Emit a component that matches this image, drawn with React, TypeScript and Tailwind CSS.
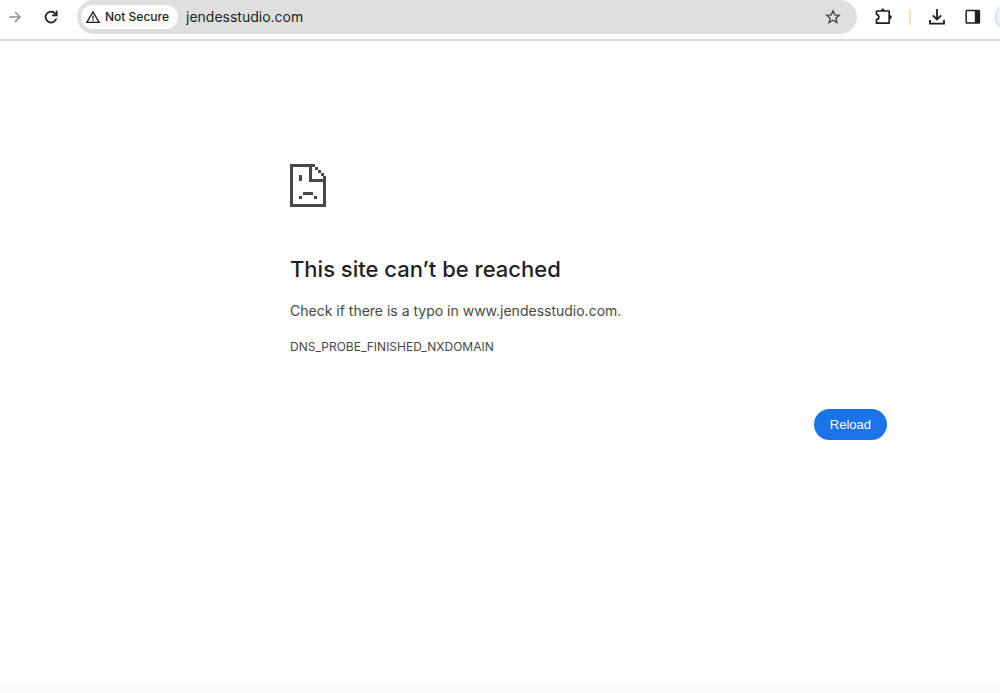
import React from "react";

const ArrowIcon = () => (
  <svg className="size-4" viewBox="0 0 16 16" fill="none" stroke="#8f8f8f" strokeWidth="1.6">
    <path d="M2 8h11M8 3l5 5-5 5" />
  </svg>
);

const ReloadIcon = () => (
  <svg className="size-4" viewBox="0 0 16 16" fill="none" stroke="#1f1f1f" strokeWidth="1.7">
    <path d="M13.4 9.4A5.5 5.5 0 1 1 12.2 4.4L13.6 6" />
    <path d="M13.7 1.8v4.6H9.2" />
  </svg>
);

const WarningIcon = () => (
  <svg className="size-4" viewBox="0 0 16 16" fill="none" stroke="#1f1f1f" strokeWidth="1.3">
    <path d="M8 2.8L14.2 13.3H1.8z" />
    <path d="M8 6.5v3.3M8 10.6v1.3" />
  </svg>
);

const StarIcon = () => (
  <svg className="size-4" viewBox="0 0 16 16" fill="none" stroke="#474747" strokeWidth="1.4">
    <path d="M8 1.9l1.8 4 4.4.4-3.3 2.9 1 4.3L8 11.2l-3.9 2.3 1-4.3-3.3-2.9 4.4-.4z" />
  </svg>
);

const ExtensionIcon = () => (
  <svg className="size-5" viewBox="0 0 20 20" fill="none" stroke="#1f1f1f" strokeWidth="1.7" strokeLinejoin="round">
    <path d="M3.5 4h12.7v12.2H3.5v-3.5c3.2-.4 3.2-4.8 0-5.2z" />
    <path d="M8.2 3.5a1.6 1.6 0 0 1 3.2 0zM16.8 8.5a1.6 1.6 0 0 1 0 3.2z" fill="#1f1f1f" strokeWidth="0.8" />
  </svg>
);

const DownloadIcon = () => (
  <svg className="size-5" viewBox="0 0 20 20" fill="none" stroke="#1f1f1f" strokeWidth="1.8">
    <path d="M10 2v10.5M5.8 8.3L10 12.5l4.2-4.2M3 13v3.6h14V13" />
  </svg>
);

const SidePanelIcon = () => (
  <svg className="size-5" viewBox="0 0 20 20">
    <rect x="3.2" y="3.5" width="13.2" height="12.6" rx="0.8" fill="none" stroke="#1f1f1f" strokeWidth="1.5" />
    <path d="M11.8 3.5h5v12.6h-5z" fill="#1f1f1f" />
  </svg>
);

const SadPageIcon = () => (
  <svg className="h-[43px] w-9" viewBox="0 0 36 43" fill="#474747">
    <path d="M0 0h25v3H3v37h30V18H19V2.5h3V15h11v-3h3v31H0z" />
    <path d="M25 3h3v3h-3zM28 6h3v3h-3zM31 9h3v3h-3z" />
    <path d="M9 11h3v6H9zM13 28h10v3H13zM9 32h3v3H9zM24 32h3v3h-3z" />
  </svg>
);

function Toolbar() {
  return (
    <header className="flex h-[41px] w-full items-start overflow-hidden border-b-2 border-[#dedede] bg-white">
      <div className="flex h-[34px] w-[77px] shrink-0 items-center gap-5 pl-[7px]">
        <button aria-label="Forward"><ArrowIcon /></button>
        <button aria-label="Reload page"><ReloadIcon /></button>
      </div>
      <div className="flex h-[34px] min-w-0 flex-1 items-center rounded-full bg-[#dfdfdf] pl-1 pr-4">
        <button className="flex h-6 w-[97px] shrink-0 items-center gap-1 rounded-full bg-white pl-1 text-xs font-medium whitespace-nowrap text-[#1f1f1f]">
          <WarningIcon />
          Not Secure
        </button>
        <input
          aria-label="Address"
          className="min-w-0 flex-1 bg-transparent pl-2 text-sm text-[#1f1f1f] outline-none"
          defaultValue="jendesstudio.com"
        />
        <button aria-label="Bookmark this page"><StarIcon /></button>
      </div>
      <div className="flex h-[34px] w-[143px] shrink-0 items-center pl-4">
        <button aria-label="Extensions"><ExtensionIcon /></button>
        <span className="mx-4 h-4 w-0.5 shrink-0 bg-[#fbdcc5]" />
        <button aria-label="Downloads"><DownloadIcon /></button>
        <button aria-label="Side panel" className="ml-4"><SidePanelIcon /></button>
        <button aria-label="Profile" className="ml-3 size-7 shrink-0 rounded-full border border-[#c8cedb] bg-[#edf2fc]" />
      </div>
    </header>
  );
}

export default function App() {
  return (
    <div className="flex min-h-screen flex-col bg-white font-['Inter',sans-serif]">
      <Toolbar />
      <main className="w-full max-w-[887px] flex-1 pt-[123px] pl-[290px] max-[700px]:px-6">
        <SadPageIcon />
        <h1 className="mt-[46px] text-[22px] leading-8 font-medium text-[#1f1f1f]">
          This site can’t be reached
        </h1>
        <p className="mt-[14px] text-sm leading-6 text-[#474747]">
          Check if there is a typo in www.jendesstudio.com.
        </p>
        <p className="mt-4 text-xs leading-4 text-[#474747]">DNS_PROBE_FINISHED_NXDOMAIN</p>
        <div className="mt-[54px] flex justify-end">
          <button className="h-[31px] rounded-full bg-[#1a73e8] px-4 font-['Liberation_Sans',sans-serif] text-[13px] font-medium text-white">
            Reload
          </button>
        </div>
      </main>
      <div className="h-4 bg-linear-to-b from-white to-[#f8f8f8]" />
    </div>
  );
}
